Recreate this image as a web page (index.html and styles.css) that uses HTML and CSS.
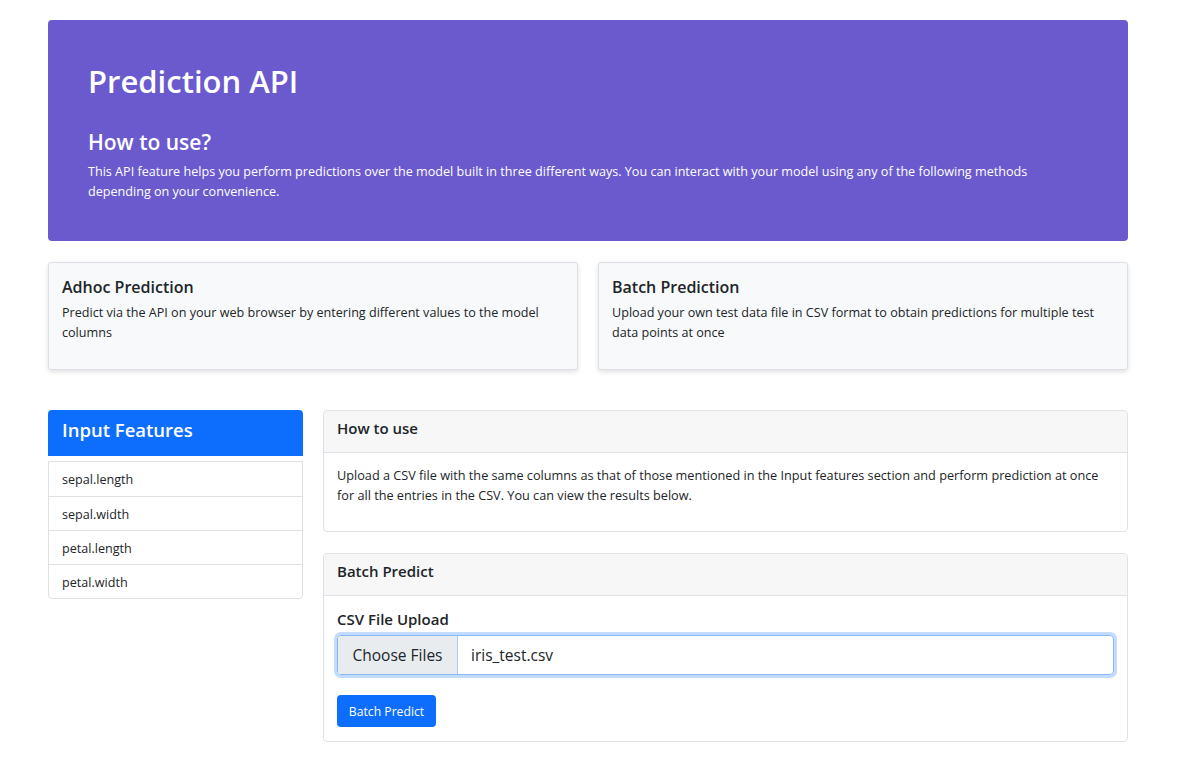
FILE: index.html
```html
<!DOCTYPE html>
<html lang="en">
<head>
<meta charset="utf-8">
<title>Prediction API</title>
<link rel="stylesheet" href="styles.css">
</head>
<body>
<div class="page">
  <header class="hero">
    <h1 class="hero-title">Prediction API</h1>
    <h2 class="hero-sub">How to use?</h2>
    <p class="hero-text">This API feature helps you perform predictions over the model built in three different ways. You can interact with your model using any of the following methods depending on your convenience.</p>
  </header>

  <section class="modes">
    <div class="mode-card">
      <h3 class="mode-title">Adhoc Prediction</h3>
      <p class="mode-text">Predict via the API on your web browser by entering different values to the model columns</p>
    </div>
    <div class="mode-card">
      <h3 class="mode-title">Batch Prediction</h3>
      <p class="mode-text">Upload your own test data file in CSV format to obtain predictions for multiple test data points at once</p>
    </div>
  </section>

  <section class="main">
    <aside class="features">
      <div class="features-head">Input Features</div>
      <ul class="features-list">
        <li>sepal.length</li>
        <li>sepal.width</li>
        <li>petal.length</li>
        <li>petal.width</li>
      </ul>
    </aside>
    <div class="panels">
      <div class="panel">
        <div class="panel-head">How to use</div>
        <div class="panel-body howto">
          <p class="panel-text">Upload a CSV file with the same columns as that of those mentioned in the Input features section and perform prediction at once for all the entries in the CSV. You can view the results below.</p>
        </div>
      </div>
      <div class="panel">
        <div class="panel-head">Batch Predict</div>
        <div class="panel-body upload">
          <label class="upload-label">CSV File Upload</label>
          <div class="file-input">
            <span class="file-btn">Choose Files</span>
            <span class="file-name">iris_test.csv</span>
          </div>
          <button class="btn-primary" type="button">Batch Predict</button>
        </div>
      </div>
    </div>
  </section>
</div>
</body>
</html>
```

FILE: styles.css
```css
* { box-sizing: border-box; }
body {
  margin: 0;
  font-family: "Open Sans", "Noto Sans", sans-serif;
  color: #212529;
  background: #fff;
}
.page {
  width: 1080px;
  margin: 20px 0 0 48px;
}
.hero {
  background: #6a5acd;
  border-radius: 4px;
  padding: 42px 40px 40px;
  color: #fff;
  height: 221px;
}
.hero-title {
  margin: 0;
  font-size: 31px;
  font-weight: 600;
  line-height: 38px;
}
.hero-sub {
  margin: 28px 0 0;
  font-size: 21px;
  font-weight: 600;
  line-height: 28px;
}
.hero-text {
  margin: 6px 0 0;
  max-width: 960px;
  font-size: 12.6px;
  line-height: 20px;
}
.modes {
  display: flex;
  gap: 20px;
  margin-top: 21px;
}
.mode-card {
  flex: 1;
  height: 108px;
  background: #f8f9fa;
  border: 1px solid #dcdfe3;
  border-radius: 3px;
  box-shadow: 0 2px 5px rgba(0,0,0,0.12);
  padding: 13px 13px;
}
.mode-title {
  margin: 0;
  font-size: 16px;
  font-weight: 600;
  line-height: 22px;
}
.mode-text {
  margin: 5px 0 0;
  font-size: 12.6px;
  line-height: 20px;
}
.main {
  display: flex;
  gap: 20px;
  margin-top: 40px;
  align-items: flex-start;
}
.features {
  width: 255px;
  flex: none;
}
.features-head {
  background: #0d6efd;
  color: #fff;
  height: 46px;
  border-radius: 4px 4px 0 0;
  padding: 0 14px;
  font-size: 18.5px;
  font-weight: 600;
  line-height: 40px;
}
.features-list {
  list-style: none;
  margin: 5px 0 0;
  padding: 0;
  border: 1px solid #dee2e6;
  border-radius: 0 0 4px 4px;
}
.features-list li {
  height: 34px;
  padding: 0 13px;
  font-size: 12.6px;
  line-height: 36px;
  border-top: 1px solid #dee2e6;
}
.features-list li:first-child { border-top: 0; }
.panels {
  flex: 1;
  display: flex;
  flex-direction: column;
  gap: 21px;
}
.panel {
  border: 1px solid #dee2e6;
  border-radius: 4px;
  background: #fff;
}
.panel-head {
  background: #f7f7f7;
  border-bottom: 1px solid #dee2e6;
  border-radius: 4px 4px 0 0;
  height: 42px;
  padding: 0 13px;
  font-size: 15px;
  font-weight: 600;
  line-height: 34px;
}
.howto {
  height: 78px;
  padding: 12px 13px 0;
}
.panel-text {
  margin: 0;
  font-size: 12.7px;
  line-height: 20px;
}
.upload {
  padding: 12px 13px 13px;
  height: 145px;
}
.upload-label {
  display: block;
  font-size: 15px;
  font-weight: 600;
  line-height: 22px;
}
.file-input {
  display: flex;
  margin-top: 5px;
  height: 40px;
  border: 1px solid #86b7fe;
  border-radius: 4px;
  box-shadow: 0 0 0 3px rgba(13,110,253,0.25);
  overflow: hidden;
  font-size: 15.5px;
}
.file-btn {
  width: 120px;
  flex: none;
  background: #e9ecef;
  border-right: 1px solid #a9c8f5;
  text-align: center;
  line-height: 38px;
}
.file-name {
  padding-left: 13px;
  line-height: 38px;
}
.btn-primary {
  display: block;
  margin-top: 20px;
  height: 32px;
  width: 99px;
  border: 0;
  border-radius: 4px;
  background: #0d6efd;
  color: #fff;
  font-family: inherit;
  font-size: 12.2px;
  padding: 0;
}
```
